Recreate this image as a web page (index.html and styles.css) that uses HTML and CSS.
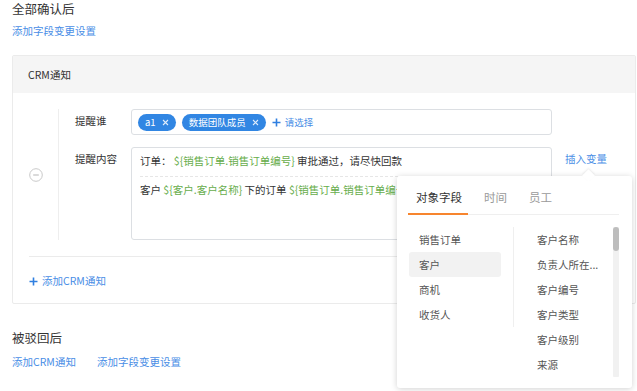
FILE: index.html
```html
<!DOCTYPE html>
<html lang="zh-CN">
<head>
<meta charset="utf-8">
<link rel="stylesheet" href="styles.css">
</head>
<body>
<div class="page">
  <div class="sec-title">全部确认后</div>
  <div class="links first"><a class="link">添加字段变更设置</a></div>

  <div class="panel">
    <div class="panel-head">CRM通知</div>
    <div class="panel-body">
      <div class="rule">
        <div class="rule-gutter">
          <svg class="minus" width="14" height="14" viewBox="0 0 14 14"><circle cx="7" cy="7" r="6.3" fill="none" stroke="#c9c9c9" stroke-width="1"/><line x1="4.2" y1="7" x2="9.8" y2="7" stroke="#b5b5b5" stroke-width="1"/></svg>
        </div>
        <div class="rule-main">
          <div class="row">
            <div class="label">提醒谁</div>
            <div class="field tags">
              <span class="pill">a1<svg class="x" width="7" height="7" viewBox="0 0 7 7"><path d="M1 1L6 6M6 1L1 6" stroke="#fff" stroke-opacity="0.85" stroke-width="1.1"/></svg></span>
              <span class="pill">数据团队成员<svg class="x" width="7" height="7" viewBox="0 0 7 7"><path d="M1 1L6 6M6 1L1 6" stroke="#fff" stroke-opacity="0.85" stroke-width="1.1"/></svg></span>
              <span class="choose"><svg class="plus" width="9" height="9" viewBox="0 0 9 9"><path d="M4.5 0.5V8.5M0.5 4.5H8.5" stroke="#2f7fe0" stroke-width="1.6"/></svg>请选择</span>
            </div>
          </div>
          <div class="row row2">
            <div class="label">提醒内容</div>
            <div class="field textarea">
              <p class="line l1">订单： <span class="var">${销售订单.销售订单编号}</span> 审批通过，请尽快回款</p>
              <p class="line l2">客户 <span class="var">${客户.客户名称}</span> 下的订单 <span class="var">${销售订单.销售订单编号}</span> 已逾期</p>
            </div>
            <a class="link insert">插入变量</a>
          </div>
        </div>
      </div>
      <div class="divider"></div>
      <div class="add-row"><svg class="plus" width="9" height="9" viewBox="0 0 9 9"><path d="M4.5 0.5V8.5M0.5 4.5H8.5" stroke="#2f7fe0" stroke-width="1.6"/></svg><a class="link">添加CRM通知</a></div>
    </div>
  </div>

  <div class="sec-title second">被驳回后</div>
  <div class="links second-links"><a class="link">添加CRM通知</a><a class="link">添加字段变更设置</a></div>
</div>

<div class="popover">
  <div class="tabs">
    <span class="tab active">对象字段</span>
    <span class="tab">时间</span>
    <span class="tab">员工</span>
  </div>
  <div class="pop-body">
    <div class="left-col">
      <div class="item">销售订单</div>
      <div class="item selected">客户</div>
      <div class="item">商机</div>
      <div class="item">收货人</div>
    </div>
    <div class="right-col">
      <div class="item">客户名称</div>
      <div class="item">负责人所在...</div>
      <div class="item">客户编号</div>
      <div class="item">客户类型</div>
      <div class="item">客户级别</div>
      <div class="item">来源</div>
    </div>
    <div class="scrollbar"><div class="thumb"></div></div>
  </div>
</div>
</body>
</html>
```

FILE: styles.css
```css
html, body {
  margin: 0;
  padding: 0;
  background: #fff;
}
body {
  position: relative;
  width: 637px;
  height: 391px;
  overflow: hidden;
  font-family: "Noto Sans CJK SC", "Noto Sans", sans-serif;
  font-size: 10.5px;
  color: #333;
}
.page {
  padding: 0 1px 0 12px;
}
.sec-title {
  font-size: 12.5px;
  line-height: 17px;
  color: #333;
}
.sec-title.second {
  margin-top: 25px;
}
.links {
  line-height: 16px;
  margin-top: 6px;
  display: flex;
  gap: 21px;
}
.second-links {
  margin-top: 8px;
}
.link {
  color: #4a8ee6;
  cursor: pointer;
}
.panel {
  margin-top: 16px;
  border: 1px solid #ebebeb;
  border-radius: 2px;
}
.panel-head {
  height: 37px;
  line-height: 37px;
  background: #f5f5f5;
  padding-left: 15px;
  color: #333;
}
.panel-body {
  padding: 16px 16px 0 16px;
}
.rule {
  display: flex;
  align-items: stretch;
}
.rule-gutter {
  width: 29px;
  border-right: 1px solid #eeeeee;
  display: flex;
  align-items: center;
}
.minus {
  display: block;
  margin-top: 1px;
}
.rule-main {
  padding-left: 16px;
}
.row {
  display: flex;
  align-items: flex-start;
}
.row2 {
  margin-top: 12px;
}
.label {
  width: 56px;
  line-height: 23px;
  color: #333;
}
.field {
  width: 421px;
  box-sizing: border-box;
  border: 1px solid #dcdfe3;
  border-radius: 3px;
}
.tags {
  height: 26px;
  display: flex;
  align-items: center;
  padding-left: 6px;
}
.pill {
  display: inline-flex;
  align-items: center;
  height: 17px;
  border-radius: 9px;
  background: #3186e3;
  color: #fff;
  font-size: 9.5px;
  padding: 0 7px 0 7px;
  margin-right: 6px;
  line-height: 17px;
}
.pill .x {
  margin-left: 6px;
}
.choose {
  display: inline-flex;
  align-items: center;
  color: #4a8ee6;
  font-size: 9.5px;
}
.choose .plus {
  margin-right: 4px;
}
.textarea {
  height: 93px;
  padding: 0 8px;
  overflow: hidden;
}
.line {
  margin: 0;
  white-space: nowrap;
  line-height: 18px;
  color: #333;
}
.l1 {
  padding: 4px 0 6px;
  border-bottom: 1px dashed #e6e6e6;
}
.l2 {
  padding-top: 4px;
}
.var {
  color: #67ad4b;
}
.insert {
  margin-left: 13px;
  line-height: 23px;
}
.divider {
  margin-top: 16px;
  height: 1px;
  background: #ebebeb;
}
.add-row {
  padding: 16px 0 14px;
  line-height: 16px;
  display: flex;
  align-items: center;
}
.add-row .plus {
  margin-right: 4px;
}

/* popover */
.popover {
  position: absolute;
  left: 397px;
  top: 176px;
  width: 235px;
  box-sizing: border-box;
  padding-bottom: 11px;
  background: #fff;
  border-radius: 3px;
  box-shadow: 0 1px 6px rgba(0, 0, 0, 0.18);
}
.popover::before {
  content: "";
  position: absolute;
  top: -5px;
  left: 187px;
  width: 9px;
  height: 9px;
  background: #fff;
  transform: rotate(45deg);
  box-shadow: -1px -1px 2px rgba(0, 0, 0, 0.07);
}
.tabs {
  position: relative;
  display: flex;
  margin: 0 13px 0 11px;
  padding-top: 13px;
  border-bottom: 1px solid #efefef;
}
.tab {
  font-size: 11.5px;
  line-height: 16px;
  padding: 0 6px 8px 8px;
  margin-right: 8px;
  color: #9a9a9a;
  margin-bottom: -1px;
  border-bottom: 2px solid transparent;
}
.tab.active {
  color: #333;
  border-bottom-color: #f7852e;
}
.pop-body {
  display: flex;
  align-items: flex-start;
  padding-top: 12px;
}
.item {
  height: 25px;
  line-height: 25px;
  color: #555;
  white-space: nowrap;
}
.left-col {
  width: 92px;
  margin-left: 12px;
  padding-right: 12px;
  border-right: 1px solid #efefef;
}
.left-col .item {
  padding-left: 10px;
  border-radius: 3px;
}
.left-col .item.selected {
  background: #f2f2f2;
}
.right-col {
  flex: 1;
  padding-left: 23px;
}
.scrollbar {
  width: 6px;
  height: 150px;
  margin-right: 13px;
  background: #f1f1f1;
  border-radius: 1px;
}
.thumb {
  height: 24px;
  background: #bdbdbd;
  border-radius: 3px;
}
```
